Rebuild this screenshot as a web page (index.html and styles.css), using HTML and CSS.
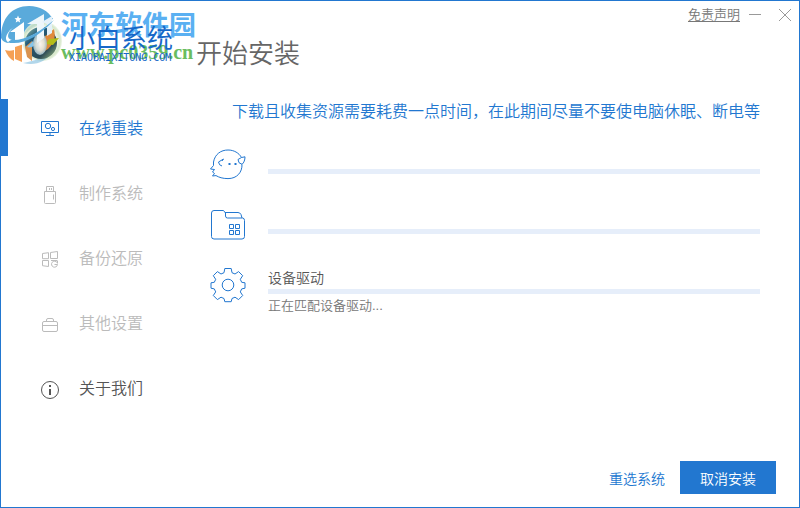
FILE: index.html
```html
<!DOCTYPE html>
<html lang="zh-CN">
<head>
<meta charset="utf-8">
<meta name="viewport" content="width=device-width, initial-scale=1">
<title>小白系统</title>
<link rel="stylesheet" href="styles.css">
</head>
<body>
<div class="window">
  <header class="header">
    <div class="brand">
      <svg class="emblem" viewBox="0 0 64 64" aria-hidden="true">
        <defs>
          <linearGradient id="lens" x1="0" y1="0" x2="1" y2="1">
            <stop offset="0" stop-color="#9fc3a8"/><stop offset=".3" stop-color="#225c7c"/><stop offset=".7" stop-color="#2c4a55"/><stop offset="1" stop-color="#a5c785"/>
          </linearGradient>
          <radialGradient id="core"><stop offset="0" stop-color="#fff"/><stop offset=".6" stop-color="#e3e7df"/><stop offset="1" stop-color="#9dbcc8"/></radialGradient>
          <radialGradient id="halo"><stop offset=".7" stop-color="#f3f8ee"/><stop offset=".9" stop-color="#cfe3c0"/><stop offset="1" stop-color="#e9f3e2"/></radialGradient>
        </defs>
        <path d="M0 37C0 17 11 5 28 5c11 0 19 5 24 13C42 21 27 28 14 41 8 43 2 42 0 37Z" fill="#5aaadb"/>
        <circle cx="41" cy="40" r="20" fill="url(#halo)" opacity=".85"/>
        <path d="M4 49c3 1 6 1 9 0v11C9 58 6 54 4 49Z" fill="#f5a055"/>
        <path d="M22 62c12 3 23-1 29-11-9 6-18 9-29 11Z" fill="#65afd8" opacity=".5"/>
        <circle cx="40" cy="42" r="16" fill="url(#lens)"/>
        <path d="M14 45l7-3v19l-7-3Z" fill="#f5a055"/>
        <path d="M38 40l15-12c2 8 0 14-6 20l-8 5Z" fill="#e08a3c"/>
        <path d="M24 46l7-6v20l-5-4Z" fill="#d9924f"/>
        <path d="M45 43l3-5 10-1-6 7Z" fill="#b5bd19"/>
        <path d="M26 46l6-6 2 4c-2 2-5 3-8 2Z" fill="#85c5ec"/>
        <ellipse cx="39" cy="43" rx="7" ry="11" fill="url(#core)" opacity=".92"/>
        <path d="M9 31l14-10v22l-9 3V31Z" fill="#fff"/>
        <path d="M26 23l17-10v24l-7 5V23Z" fill="#eef6fa"/>
        <path d="M41 21l10-6v17l-5 3V23Z" fill="#e4f1fa"/>
        <path d="M13 26C4 32 2 41 10 42c13 0 30-10 44-23C40 31 24 40 11 39 5 38 6 31 13 26Z" fill="#fff"/>
        <path d="M10 39c14 1 30-9 43-20C40 34 24 43 11 42 7 42 6 41 10 39Z" fill="#5aaadb"/>
        <path d="M17 14.500l1 2.500 2.600.3-2 1.700.5 2.600-2.100-1.400-2.300 1.200.7-2.500-1.900-1.700 2.500-.1Z" fill="#fff"/>
      </svg>
      <div class="watermark">
        <span class="mark-name">河东软件园</span>
        <span class="mark-url">www.pc0359.cn</span>
      </div>
      <div class="names">
        <span class="name">小白系统</span>
        <span class="domain">XIAOBAIXITONG.COM</span>
      </div>
    </div>
    <h1 class="title">开始安装</h1>
    <div class="controls">
      <a class="disclaimer" href="#">免责声明</a>
      <button class="control" type="button" aria-label="最小化"><svg viewBox="0 0 14 14"><path d="M1 6.500h12"/></svg></button>
      <button class="control" type="button" aria-label="关闭"><svg viewBox="0 0 14 14"><path d="M1 1l12 12M13 1L1 13"/></svg></button>
    </div>
  </header>
  <div class="content">
    <nav class="sidebar">
      <a class="item active" href="#">
        <svg viewBox="0 0 20 20"><path d="M1.500 1.500h17v11h-17ZM10 13v2.500M6 15.500h8"/><circle cx="8" cy="6" r="2.700"/><circle cx="13" cy="9" r="1.600"/></svg>
        <span>在线重装</span>
      </a>
      <a class="item disabled" href="#">
        <svg viewBox="0 0 20 20"><path d="M4.500 6.500h11v11q0 1-1 1h-9q-1 0-1-1ZM6.500 6V1.500h7V6M9.500 3v2M11.500 3v2M13.500 9.500v5"/></svg>
        <span>制作系统</span>
      </a>
      <a class="item disabled" href="#">
        <svg viewBox="0 0 20 20"><path d="M2.500 3.500l6-.8v6h-6ZM10.500 2.500l7-1v7h-7ZM2.500 10.500h6v6l-6-.8ZM11 10.500h6M17 12.500a3 3 0 1 0 .5 2h-3M17.500 10.500v3"/></svg>
        <span>备份还原</span>
      </a>
      <a class="item disabled" href="#">
        <svg viewBox="0 0 20 20"><rect x="2.500" y="6.500" width="15" height="10" rx="1.500"/><path d="M6.500 6V5q0-1.500 1.500-1.500h4q1.500 0 1.500 1.500v1M2.500 10.500h15"/></svg>
        <span>其他设置</span>
      </a>
      <a class="item" href="#">
        <svg viewBox="0 0 20 20"><circle cx="10" cy="10" r="8.500"/><path class="info" d="M10 5v2M10 9V15"/></svg>
        <span>关于我们</span>
      </a>
    </nav>
    <main class="main">
      <p class="notice">下载且收集资源需要耗费一点时间，在此期间尽量不要使电脑休眠、断电等</p>
      <ul class="tasks">
        <li class="task">
          <svg viewBox="0 0 36 36"><path d="M3.500 15C5 7 11 3 18 3c6 0 11 3 13.500 7.500L35 9.800c0 3-1 6-3 7.500.3 8-5 14.300-14 14.300-5.500 0-9-1.300-12-3l-3.500.4 2-2.500-2-1.500 2-2.500L.5 22l3-3.500ZM8.500 15l5-3-1.500 2M8.500 15q.5 3.500 3.500 4M31.500 10.500L28 12.500M28 12.500q0 4 4 4.800"/><path class="dots" d="M18.500 17h2M24.500 17h2"/></svg>
          <div class="detail"><label class="label" for="p1"></label><progress id="p1" value="0" max="100"></progress><span class="status"></span></div>
        </li>
        <li class="task">
          <svg viewBox="0 0 36 36"><path d="M1.500 6q0-2.500 2.500-2.500h9.500l2 2.500v3q0 2 2 2h15q2 0 2 2.500v16q0 2.500-2.500 2.500H4q-2.500 0-2.500-2.500ZM15 5.500h13q2 0 3 2l1 3.500"/><path d="M19.500 17.500h4v4h-4ZM25.500 17.500h4v4h-4ZM19.500 23.500h4v4h-4ZM25.500 23.500h4v4h-4Z"/></svg>
          <div class="detail"><label class="label" for="p2"></label><progress id="p2" value="0" max="100"></progress><span class="status"></span></div>
        </li>
        <li class="task">
          <svg viewBox="0 0 36 36"><circle cx="18" cy="18" r="5.800"/><path d="M14.800 1.500h6.400l.8 4.200 3 1.300 3.600-2.400 4.100 4.100L30.300 12.300l1.400 3 3.300.5v5.400l-3.300.7-1.400 3 2.400 3.600-4.100 4.100L25 30.200l-3 1.300-.8 3.200h-6.400l-.8-3.200-3-1.300-3.600 2.400-4.100-4.100 2.400-3.600-1.400-3-3.300-.7v-5.400l3.300-.5 1.400-3L3.300 8.700l4.100-4.100L11 7l3-1.300Z"/></svg>
          <div class="detail"><label class="label" for="p3">设备驱动</label><progress id="p3" value="0" max="100"></progress><span class="status">正在匹配设备驱动...</span></div>
        </li>
      </ul>
      <footer class="actions">
        <button class="text-button" type="button">重选系统</button>
        <button class="primary" type="button">取消安装</button>
      </footer>
    </main>
  </div>
</div>
</body>
</html>
```
FILE: styles.css
```css
* {
  box-sizing: border-box;
}

body {
  margin: 0;
  font-family: "Liberation Sans", "Noto Sans CJK SC", sans-serif;
  font-weight: 350;
  color: #555;
  background: #fff;
}

svg {
  display: block;
  fill: none;
  stroke: currentColor;
  stroke-width: 1;
}

a {
  color: inherit;
  text-decoration: none;
}

button {
  border: 0;
  padding: 0;
  background: none;
  font: inherit;
  color: inherit;
  cursor: pointer;
}

.window {
  display: flex;
  flex-direction: column;
  min-height: 100vh;
  border: 1px solid #2277d0;
}

.header {
  display: flex;
  align-items: flex-start;
  min-height: 98px;
}

.brand {
  position: relative;
  flex: 0 0 195px;
  display: flex;
}

.emblem {
  flex: none;
  width: 64px;
  height: 64px;
  stroke: none;
}

.names {
  position: relative;
  display: flex;
  flex-direction: column;
  padding: 24px 0 0 4px;
  color: #1668c8;
}

.name {
  font-size: 26px;
  line-height: 28px;
  font-weight: 400;
}

.domain {
  font-family: "DejaVu Sans Mono", monospace;
  font-size: 10px;
  line-height: 10px;
  font-weight: 400;
}

.watermark {
  position: absolute;
  left: 60px;
  top: 9px;
  display: flex;
  flex-direction: column;
  font-weight: 700;
  white-space: nowrap;
}

.mark-name {
  font-size: 27px;
  line-height: 32px;
  color: #5ab0f2;
}

.mark-url {
  font-family: "Liberation Serif", serif;
  font-size: 20px;
  line-height: 20px;
  color: #6abd60;
}

.title {
  flex: 1;
  margin: 0;
  padding-top: 36px;
  font-size: 26px;
  line-height: 34px;
  font-weight: 350;
  color: #666;
}

.controls {
  display: flex;
  align-items: center;
  gap: 8px;
  padding: 4px 7px 0 0;
  color: #999;
}

.disclaimer {
  font-size: 13px;
  line-height: 20px;
  color: #777;
  text-decoration: underline;
  text-underline-offset: 2px;
}

.control + .control {
  margin-left: 8px;
}

.control svg {
  width: 14px;
  height: 14px;
}

.content {
  flex: 1;
  display: flex;
}

.sidebar {
  flex: 0 0 209px;
  display: flex;
  flex-direction: column;
  gap: 8px;
}

.item {
  display: flex;
  align-items: center;
  gap: 19px;
  height: 57px;
  padding: 0 0 2px 32px;
  border-left: 7px solid transparent;
  font-size: 16px;
}

.item svg {
  width: 20px;
  height: 20px;
  margin-top: 6px;
}

.item .info {
  stroke-width: 2;
}

.active {
  color: #2277d0;
  border-left-color: #2277d0;
}

.disabled {
  color: #bbb;
}

.main {
  flex: 1;
  display: flex;
  flex-direction: column;
  padding-right: 23px;
}

.notice {
  margin: 0;
  padding: 1px 16px 0 0;
  font-size: 16px;
  line-height: 24px;
  text-align: right;
  color: #2277d0;
}

.tasks {
  list-style: none;
  margin: 18px 0 0;
  padding: 0 16px 0 0;
}

.task {
  display: flex;
  gap: 22px;
  height: 60px;
}

.task svg {
  flex: none;
  width: 36px;
  height: 36px;
  margin-top: 5px;
  color: #2277d0;
}

.task .dots {
  stroke-width: 2;
}

.detail {
  flex: 1;
  display: flex;
  flex-direction: column;
}

.label {
  height: 27px;
  padding-top: 5px;
  font-size: 14px;
  line-height: 22px;
}

progress {
  appearance: none;
  display: block;
  width: 100%;
  height: 5px;
  border: 0;
  background: #e6eefa;
}

progress::-webkit-progress-bar {
  background: #e6eefa;
}

progress::-webkit-progress-value {
  background: #2277d0;
}

.status {
  font-size: 13px;
  line-height: 24px;
  color: #777;
}

.actions {
  display: flex;
  justify-content: flex-end;
  align-items: center;
  gap: 15px;
  margin-top: auto;
  padding-bottom: 13px;
  font-size: 14px;
}

.text-button {
  color: #2277d0;
}

.primary {
  width: 96px;
  height: 33px;
  background: #2277d0;
  color: #fff;
}
```
